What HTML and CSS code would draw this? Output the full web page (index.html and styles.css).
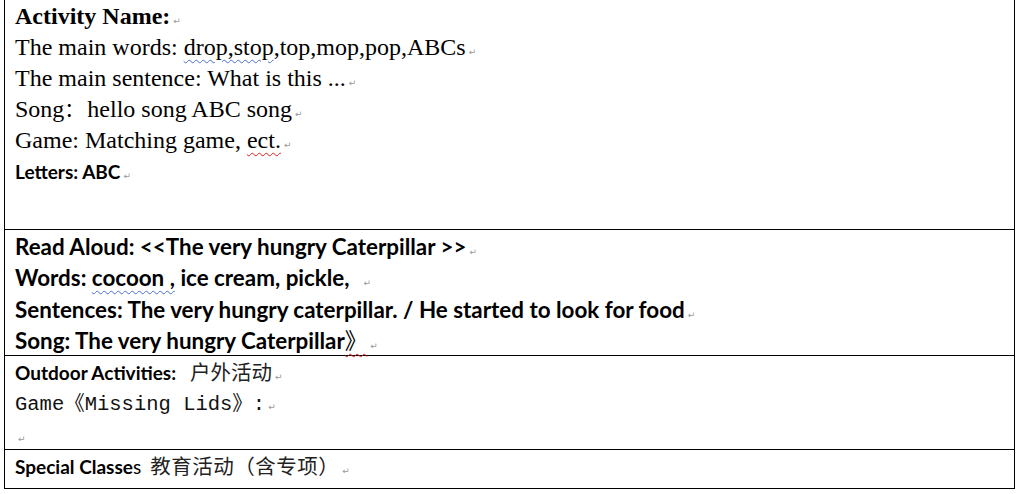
FILE: index.html
```html
<!DOCTYPE html>
<html lang="en">
  <head>
    <meta charset="UTF-8" />
    <title>Activity Plan</title>
    <link rel="stylesheet" href="styles.css">
  </head>
  <body>
    <div class="sheet">
      <div class="cell cell-activity">
        <p class="serif"><strong>Activity Name:</strong><span class="mark">↵</span></p>
        <p class="serif">The main words: <span class="spell-blue">drop,stop</span>,top,mop,pop,ABCs<span class="mark">↵</span></p>
        <p class="serif">The main sentence: What is this ...<span class="mark">↵</span></p>
        <p class="serif">Song<span class="colon">：</span>hello song ABC song<span class="mark">↵</span></p>
        <p class="serif">Game: Matching game, <span class="spell-red">ect.</span><span class="mark">↵</span></p>
        <p class="sans small bold">Letters: ABC<span class="mark">↵</span></p>
      </div>

      <div class="cell cell-read">
        <p class="sans big bold">Read Aloud: &lt;&lt;The very hungry Caterpillar &gt;&gt;<span class="mark">↵</span></p>
        <p class="sans big bold">Words: <span class="spell-blue">cocoon ,</span> ice cream, pickle, &nbsp;<span class="mark">↵</span></p>
        <p class="sans big bold">Sentences: The very hungry caterpillar. / He started to look for food<span class="mark">↵</span></p>
        <p class="sans big bold">Song: The very hungry Caterpillar<span class="spell-red cjk-punct">》</span><span class="mark">↵</span></p>
      </div>

      <div class="cell cell-outdoor">
        <p class="sans small"><strong>Outdoor Activities:</strong><span class="cjk cjk-gap">户外活动</span><span class="mark">↵</span></p>
        <p class="mono">Game<span class="cjk-punct">《</span>Missing Lids<span class="cjk-punct">》</span>:<span class="mark">↵</span></p>
        <p class="mono"><span class="mark">↵</span></p>
      </div>

      <div class="cell cell-special">
        <p class="sans small"><strong>Special Classe</strong>s<span class="cjk cjk-gap-s">教育活动（含专项）</span><span class="mark">↵</span></p>
      </div>
    </div>
  </body>
</html>
```

FILE: styles.css
```css
body {
  margin: 0;
  background: #fff;
  color: #000;
}
.sheet {
  margin-left: 4px;
  width: 1009px;
  border-left: 1px solid #000;
  border-right: 1px solid #000;
  border-bottom: 1px solid #000;
}
.cell {
  box-sizing: border-box;
  padding: 1px 10px 0;
  border-top: 1px solid #000;
}
.cell p {
  margin: 0;
  height: 31px;
  line-height: 31px;
  white-space: nowrap;
}
.cell-activity {
  height: 229px;
  border-top: none;
  padding-top: 1px;
}
.cell-read {
  height: 126px;
  padding-top: 1px;
}
.cell-read p {
  height: 31.3px;
}
.cell-outdoor {
  height: 94px;
  padding-top: 1px;
}
.cell-outdoor .mono {
  height: 32px;
  line-height: 34px;
}
.cell-special {
  height: 39px;
  padding-top: 1px;
}
.serif {
  font-family: "Liberation Serif", "Times New Roman", serif;
  font-size: 24px;
}
.sans {
  font-family: Lato, "Noto Sans", sans-serif;
}
.big {
  font-size: 22.4px;
}
.small {
  font-size: 19px;
}
.bold {
  font-weight: bold;
}
.mono {
  font-family: "Liberation Mono", "Noto Sans CJK SC", monospace;
  font-size: 20.5px;
  color: #111;
}
.cjk {
  font-family: "Noto Sans CJK SC", sans-serif;
  font-weight: normal;
  font-size: 20.5px;
  line-height: 1;
  color: #222;
}
.cjk-gap {
  margin-left: 14px;
}
.cjk-gap-s {
  margin-left: 9px;
  letter-spacing: 0.5px;
}
.cjk-punct {
  font-family: "Noto Sans CJK SC", sans-serif;
  font-weight: normal;
  line-height: 1;
}
.colon {
  font-family: "Noto Sans CJK SC", sans-serif;
  font-size: 20px;
  line-height: 1;
  margin-right: 3px;
}
.mark {
  font-family: "DejaVu Sans", sans-serif;
  font-size: 9px;
  font-weight: normal;
  line-height: 1;
  color: #999;
  margin-left: 3px;
}
.spell-blue {
  text-decoration: underline wavy #4a6fd8;
  text-decoration-thickness: 1px;
  text-underline-offset: 4px;
}
.spell-red {
  text-decoration: underline wavy #e02020;
  text-decoration-thickness: 1px;
  text-underline-offset: 4px;
}
```
